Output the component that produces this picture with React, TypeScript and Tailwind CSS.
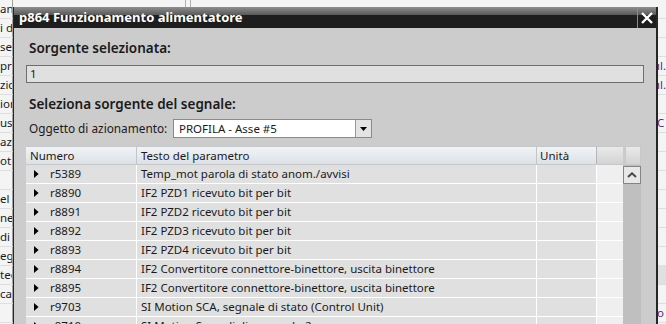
import React from "react";

const rows: [string, string][] = [
  ["r5389", "Temp_mot parola di stato anom./avvisi"],
  ["r8890", "IF2 PZD1 ricevuto bit per bit"],
  ["r8891", "IF2 PZD2 ricevuto bit per bit"],
  ["r8892", "IF2 PZD3 ricevuto bit per bit"],
  ["r8893", "IF2 PZD4 ricevuto bit per bit"],
  ["r8894", "IF2 Convertitore connettore-binettore, uscita binettore"],
  ["r8895", "IF2 Convertitore connettore-binettore, uscita binettore"],
  ["r9703", "SI Motion SCA, segnale di stato (Control Unit)"],
  ["r9710", "SI Motion Segnali di comando 2"],
];

const bgLeft = ["an", "i d", "se", "pri", "zic", "ior", "usc", "azi", "ot", "", "el v", "ne", "di a", "eg", "tec", "ca", "", ""];
const bgRight: Record<number, string> = { 3: "ıl.", 4: "ıl.", 6: "C", 16: "o" };

function RowArrow() {
  return (
    <svg width="5" height="8" viewBox="0 0 5 8" className="shrink-0">
      <polygon points="0,0 4.6,4 0,8" fill="#000" />
    </svg>
  );
}

export default function App() {
  return (
    <div className="relative w-[666px] h-[324px] overflow-hidden bg-[#f4f4f4] font-['Noto_Sans',sans-serif] text-[#1a1a1a]">
      {/* background page */}
      <div className="flex flex-col">
        {bgLeft.map((l, i) => (
          <div key={i} className="h-[19px] flex border-b border-[#dedede] text-[11.5px] leading-[18px]">
            <div className="w-[13px] overflow-hidden whitespace-nowrap border-r border-[#a0a0a0]">{l}</div>
            {i === 0 ? (
              <div className="flex-1 flex">
                <div className="w-[172px]" />
                <div className="w-[6px] border-l border-r border-[#b0b0b0]" />
              </div>
            ) : (
              <div className="flex-1" />
            )}
            <div className={`w-[9px] overflow-hidden whitespace-nowrap text-[#5a2a78] ${i === 14 ? "bg-[#e0e0e0]" : ""}`}>
              {bgRight[i] ?? ""}
            </div>
          </div>
        ))}
      </div>

      {/* dialog */}
      <div className="absolute left-[13px] top-[7px] w-[645px] h-[330px] border-l border-r-2 border-[#262626] bg-[#cccccc] flex flex-col">
        {/* title bar */}
        <div className="h-[21px] flex items-stretch bg-[linear-gradient(to_bottom,#8e8e8e_0%,#5c5c5c_36%,#1e1e1e_39%,#1e1e1e_100%)]">
          <div className="flex-1 pl-[5px] text-white font-bold text-[13px] leading-[21px] whitespace-nowrap">
            p864 Funzionamento alimentatore
          </div>
          <div className="w-[19px] border-l border-[#8a8a8a] flex items-center justify-center">
            <svg width="12" height="12" viewBox="0 0 12 12">
              <path d="M1 1 L11 11 M11 1 L1 11" stroke="#fff" strokeWidth="2.4" />
            </svg>
          </div>
        </div>

        {/* body */}
        <div className="flex flex-col">
          <div className="mt-[11px] pl-[15px] h-[19px] text-[13.5px] leading-[19px] font-semibold">Sorgente selezionata:</div>
          <div className="mt-[7px] mx-[12px] h-[18px] border border-[#6e6e6e] bg-[#e0e0e0] pl-[3px] text-[11.5px] leading-[16px]">
            1
          </div>
          <div className="mt-[12px] pl-[15px] h-[19px] text-[13.5px] leading-[19px] font-semibold">
            Seleziona sorgente del segnale:
          </div>
          <div className="mt-[5px] pl-[15px] flex items-center h-[19px]">
            <div className="w-[144px] text-[11.8px] leading-[19px] whitespace-nowrap">Oggetto di azionamento:</div>
            <div className="w-[199px] h-[19px] flex border border-[#8a8a8a] bg-white">
              <div className="flex-1 pl-[5px] text-[11.5px] leading-[17px]">PROFILA - Asse #5</div>
              <div className="w-[16px] border-l border-[#9a9a9a] bg-[#e4e4e4] flex items-center justify-center">
                <svg width="7" height="4" viewBox="0 0 7 4">
                  <polygon points="0,0 7,0 3.5,4" fill="#000" />
                </svg>
              </div>
            </div>
          </div>

          {/* table */}
          <div className="mt-[8px] mx-[12px] flex text-[11.5px]">
            <div className="w-[597px] flex flex-col">
              <div className="h-[19px] flex border-t border-b border-[#c4c7cb] leading-[17px]">
                <div className="w-[111px] pl-[4px] border-r border-[#c2c5c9] bg-[linear-gradient(to_bottom,#f1f3f6,#dde1e6)]">Numero</div>
                <div className="w-[400px] pl-[4px] border-r border-[#c2c5c9] bg-[linear-gradient(to_bottom,#f1f3f6,#dde1e6)]">Testo del parametro</div>
                <div className="w-[60px] pl-[3px] border-r border-[#b4b4b4] bg-[linear-gradient(to_bottom,#f1f3f6,#dde1e6)]">Unità</div>
                <div className="w-[26px] bg-[linear-gradient(to_bottom,#e9e9e9,#d3d3d3)]" />
              </div>
              {rows.map(([n, t]) => (
                <div key={n} className="h-[19px] flex border-b border-white leading-[18px]">
                  <div className="w-[111px] pl-[8px] flex items-center border-r border-white bg-[#e0e0e0]">
                    <RowArrow />
                    <span className="ml-[11px]">{n}</span>
                  </div>
                  <div className="w-[400px] pl-[4px] border-r border-white bg-[#e0e0e0] whitespace-nowrap overflow-hidden">{t}</div>
                  <div className="w-[60px] border-r border-white bg-[#e0e0e0]" />
                  <div className="w-[26px] bg-[#efefef]" />
                </div>
              ))}
            </div>
            <div className="w-[18px] flex flex-col">
              <div className="h-[19px] pl-[2px]">
                <div className="h-full border border-[#c8c8c8] bg-[linear-gradient(to_bottom,#e9e9e9,#d3d3d3)]" />
              </div>
              <div className="flex-1 bg-[#bfbfbf] pt-[1px]">
                <div className="h-[18px] border border-[#858585] bg-[#e8e8e8] flex items-center justify-center">
                  <svg width="10" height="6" viewBox="0 0 10 6">
                    <path d="M1 5 L5 1.3 L9 5" stroke="#4a4a4a" strokeWidth="2" fill="none" />
                  </svg>
                </div>
              </div>
            </div>
          </div>
        </div>
      </div>
    </div>
  );
}
